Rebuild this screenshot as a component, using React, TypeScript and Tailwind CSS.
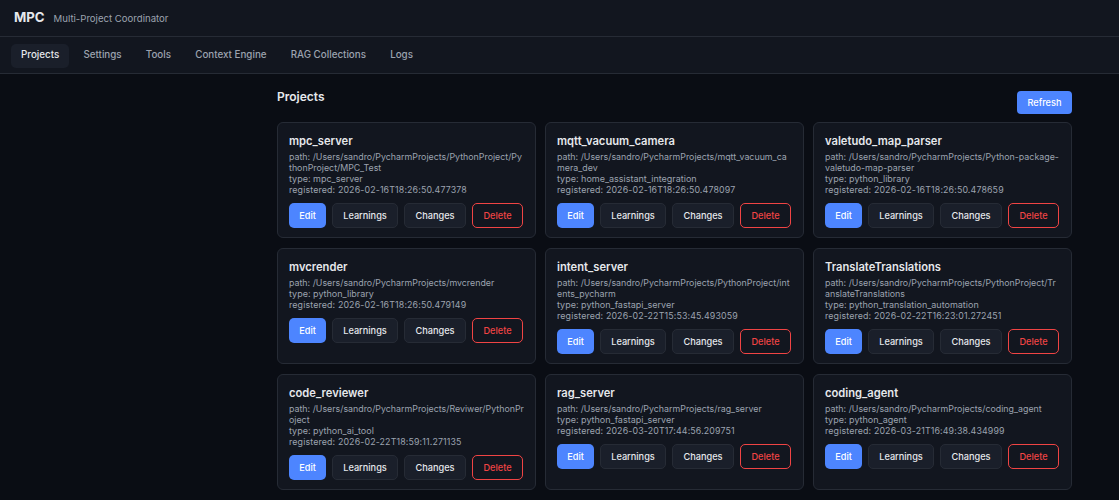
const tabs = ["Projects", "Settings", "Tools", "Context Engine", "RAG Collections", "Logs"];

const projects = [
  { name: "mpc_server", path: "/Users/sandro/PycharmProjects/PythonProject/PythonProject/MPC_Test", type: "mpc_server", registered: "2026-02-16T18:26:50.477378" },
  { name: "mqtt_vacuum_camera", path: "/Users/sandro/PycharmProjects/mqtt_vacuum_camera_dev", type: "home_assistant_integration", registered: "2026-02-16T18:26:50.478097" },
  { name: "valetudo_map_parser", path: "/Users/sandro/PycharmProjects/Python-package-valetudo-map-parser", type: "python_library", registered: "2026-02-16T18:26:50.478659" },
  { name: "mvcrender", path: "/Users/sandro/PycharmProjects/mvcrender", type: "python_library", registered: "2026-02-16T18:26:50.479149" },
  { name: "intent_server", path: "/Users/sandro/PycharmProjects/PythonProject/intents_pycharm", type: "python_fastapi_server", registered: "2026-02-22T15:53:45.493059" },
  { name: "TranslateTranslations", path: "/Users/sandro/PycharmProjects/PythonProject/TranslateTranslations", type: "python_translation_automation", registered: "2026-02-22T16:23:01.272451" },
  { name: "code_reviewer", path: "/Users/sandro/PycharmProjects/Reviwer/PythonProject", type: "python_ai_tool", registered: "2026-02-22T18:59:11.271135" },
  { name: "rag_server", path: "/Users/sandro/PycharmProjects/rag_server", type: "python_fastapi_server", registered: "2026-03-20T17:44:56.209751" },
  { name: "coding_agent", path: "/Users/sandro/PycharmProjects/coding_agent", type: "python_agent", registered: "2026-03-21T16:49:38.434999" },
];

export default function App() {
  return (
    <div className="h-[500px] overflow-hidden bg-[#0a0d14] font-['Inter',sans-serif] text-[#e6e8ec]">
      <header className="flex h-[37px] items-center gap-[9px] border-b border-[#262b35] bg-[#12161f] px-[14px]">
        <h1 className="text-[13.2px] font-bold">MPC</h1>
        <span className="pt-[2px] text-[9.6px] text-[#9ca3af]">Multi-Project Coordinator</span>
      </header>

      <nav className="flex h-[37px] items-center gap-[4.2px] border-b border-[#262b35] bg-[#12161f] px-[11px]">
        {tabs.map((tab, i) => (
          <button
            key={tab}
            className={
              i === 0
                ? "mt-[1px] h-[24px] rounded-[5px] bg-[#1a1f2a] px-[10px] text-[9.8px] font-medium text-[#e6e8ec]"
                : "mt-[1px] h-[24px] rounded-[5px] px-[10px] text-[9.8px] font-medium text-[#9ca3af]"
            }
          >
            {tab}
          </button>
        ))}
      </nav>

      <main className="pl-[277px] pr-[47px]">
        <div className="flex h-[48px] items-start justify-between pt-[15px]">
          <h2 className="text-[12px] leading-[16px] font-semibold">Projects</h2>
          <button className="mt-[2px] h-[23px] w-[55px] rounded-[4px] bg-[#4d85ff] text-[9.2px] font-medium text-white">
            Refresh
          </button>
        </div>

        <div className="grid grid-cols-3 gap-[10px_9px]">
          {projects.map((p) => (
            <div key={p.name} className="h-[116px] rounded-[6px] border border-[#262b35] bg-[#12161f] px-[11px] pt-[11px]">
              <h3 className="text-[11.2px] leading-[15px] font-semibold">{p.name}</h3>
              <div className="mt-[2px] text-[8.85px] leading-[11px] break-all text-[#9ca3af]">
                <div>{`path: ${p.path}`}</div>
                <div className="text-[9px]">{`type: ${p.type}`}</div>
                <div className="tracking-[0.13px]">{`registered: ${p.registered}`}</div>
              </div>
              <div className="mt-[8px] flex gap-[6px]">
                <button className="h-[25px] w-[37px] rounded-[5px] bg-[#4d85ff] text-[9.2px] font-medium text-white">Edit</button>
                <button className="h-[25px] w-[66px] rounded-[5px] border border-[#262b35] bg-[#1a1f2a] text-[9.2px] font-medium">Learnings</button>
                <button className="h-[25px] w-[62px] rounded-[5px] border border-[#262b35] bg-[#1a1f2a] text-[9.2px] font-medium">Changes</button>
                <button className="h-[25px] w-[51px] rounded-[5px] border border-[#f04444] bg-transparent text-[9.2px] font-medium text-[#f04444]">Delete</button>
              </div>
            </div>
          ))}
        </div>
      </main>
    </div>
  );
}
